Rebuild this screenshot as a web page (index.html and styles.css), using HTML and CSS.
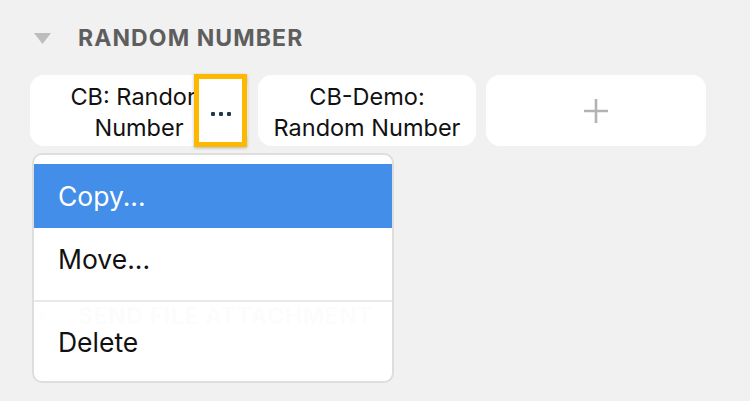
FILE: index.html
```html
<!DOCTYPE html>
<html>
<head>
<meta charset="utf-8">
<link rel="stylesheet" href="styles.css">
</head>
<body>
<div class="page">
  <section class="section">
    <div class="sec-head">
      <svg class="tri" width="17" height="11" viewBox="0 0 17 11"><polygon points="0,0 17,0 8.5,11" fill="#bdbdbd"/></svg>
      <span class="sec-title">RANDOM NUMBER</span>
    </div>
    <div class="cards">
      <div class="card first">
        <span class="card-text">CB: Random<br>Number</span>
        <div class="more"><span class="dot"></span><span class="dot"></span><span class="dot"></span></div>
      </div>
      <div class="card"><span class="card-text">CB-Demo:<br>Random Number</span></div>
      <div class="card add">
        <svg width="26" height="26" viewBox="0 0 26 26"><path d="M13 1v24M1 13h24" stroke="#b3b3b3" stroke-width="2.6"/></svg>
      </div>
    </div>
  </section>
  <section class="section second">
    <div class="sec-head">
      <svg class="tri-side" width="11" height="17" viewBox="0 0 11 17"><polygon points="0,0 11,8.5 0,17" fill="#bdbdbd"/></svg>
      <span class="sec-title side-title">SEND FILE ATTACHMENT</span>
    </div>
  </section>
  <div class="menu">
    <div class="item active">Copy...</div>
    <div class="item move">Move...</div>
    <div class="item del">Delete</div>
  </div>
</div>
</body>
</html>
```
FILE: styles.css
```css
html, body {
  margin: 0;
  padding: 0;
  background: #f1f1f1;
  font-family: "Inter", "Noto Sans", sans-serif;
  width: 750px;
  height: 401px;
  overflow: hidden;
}
.page {
  position: relative;
  padding: 22px 0 0 30px;
}
.sec-head {
  display: flex;
  align-items: center;
  height: 32px;
}
.tri {
  margin-left: 4px;
  width: 17px;
}
.tri-side {
  margin-left: 8px;
  width: 11px;
}
.sec-title {
  margin-left: 27px;
  font-size: 23px;
  font-weight: 700;
  letter-spacing: 1.1px;
  color: #5e5e5e;
}
.side-title {
  margin-left: 29px;
  letter-spacing: 0.6px;
}
.cards {
  display: flex;
  gap: 10px;
  margin-top: 21px;
}
.card {
  position: relative;
  width: 218px;
  height: 71px;
  background: #fff;
  border-radius: 14px;
  display: flex;
  align-items: center;
  justify-content: center;
  text-align: center;
}
.card-text {
  font-size: 23.5px;
  line-height: 31px;
  color: #111;
  margin-top: 3px;
}
.card.add {
  width: 220px;
}
.more {
  position: absolute;
  left: 164px;
  top: -1px;
  width: 43px;
  height: 63px;
  border: 5px solid #fdb900;
  background: #fff;
  display: flex;
  align-items: center;
  justify-content: center;
  gap: 4px;
  box-shadow: 0 1px 3px rgba(0,0,0,0.25);
}
.dot {
  width: 4px;
  height: 4px;
  background: #1e3a4f;
  border-radius: 1px;
  margin-top: 6px;
}
.second {
  margin-top: 154px;
}
.menu {
  position: absolute;
  left: 32px;
  top: 153px;
  width: 358px;
  padding-top: 9px;
  background: rgba(255,255,255,0.985);
  border: 2px solid #dedede;
  border-radius: 10px;
  overflow: hidden;
}
.item {
  font-size: 26.5px;
  color: #111;
  padding-left: 24px;
  display: flex;
  align-items: center;
}
.item.active {
  background: #428ee8;
  color: #fff;
  height: 64px;
}
.item.move {
  height: 62px;
  padding-bottom: 10px;
  border-bottom: 2px solid #e8e8e8;
}
.item.del {
  height: 79px;
}
```
